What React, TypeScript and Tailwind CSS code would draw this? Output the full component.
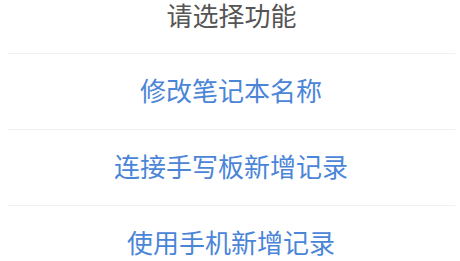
import React from "react";

const font = { fontFamily: '"Noto Sans CJK SC", "Noto Sans", sans-serif' };

export default function App() {
  const items = ["修改笔记本名称", "连接手写板新增记录", "使用手机新增记录"];
  return (
    <div className="w-[460px] h-[261px] bg-white overflow-hidden" style={font}>
      <div className="h-[53px] flex justify-center pt-0">
        <span className="text-[26px] leading-[30px] text-[#555555] pl-[3px]">请选择功能</span>
      </div>
      {items.map((t) => (
        <div key={t}>
          <div className="h-px ml-2 mr-[5px] bg-[#f1f1f1]" />
          <div className="h-[75px] flex items-center justify-center pb-[3px]">
            <span className="text-[26px] leading-[32px] text-[#4a85d8] pl-[2px]">{t}</span>
          </div>
        </div>
      ))}
    </div>
  );
}
